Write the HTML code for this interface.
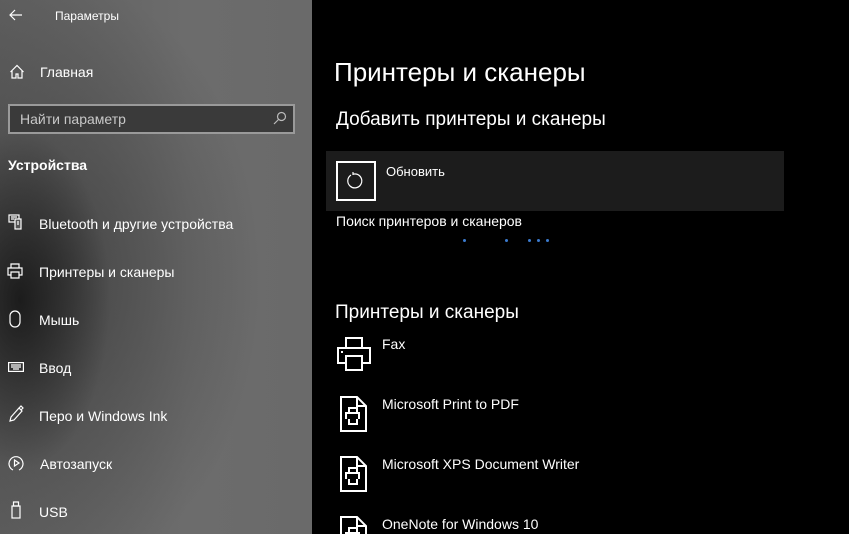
<!DOCTYPE html>
<html><head><meta charset="utf-8"><style>
*{margin:0;padding:0;box-sizing:border-box}
html,body{width:849px;height:534px;overflow:hidden}
body{background:#000;font-family:"Segoe UI","Liberation Sans","DejaVu Sans",sans-serif;color:#fff;position:relative}
.side{position:absolute;left:0;top:0;width:312px;height:534px;background:
radial-gradient(ellipse 90px 170px at 20px 300px,rgba(20,20,20,.85),rgba(20,20,20,0)),
radial-gradient(ellipse 200px 300px at 60px 280px,rgba(40,40,40,.5),rgba(40,40,40,0)),
linear-gradient(90deg,#5e5e5e,#6c6c6c 60%,#6a6a6a)}
.t{position:absolute;white-space:nowrap}
svg{position:absolute;fill:none;stroke:#fff;stroke-width:1.2}
.nav{font-size:14px;left:39px}
</style></head><body>
<div class="side">
<svg style="left:9px;top:8px" width="14" height="14" viewBox="0 0 14 14"><path d="M13 7H1M6 2L1 7l5 5"/></svg>
<div class="t" style="left:55px;top:9px;font-size:12px">Параметры</div>
<svg style="left:9px;top:64px" width="16" height="16" viewBox="0 0 16 16"><path d="M1.5 8L8 1.5 14.5 8M3 6.5V14h4v-4h2v4h4V6.5"/></svg>
<div class="t nav" style="left:40px;top:64px">Главная</div>
<div style="position:absolute;left:8px;top:104px;width:287px;height:30px;border:2px solid #9a9a9a;background:#3a3a3a"></div>
<div class="t" style="left:20px;top:111px;font-size:14px;color:#c8c8c8">Найти параметр</div>
<svg style="left:273px;top:111px;stroke:#bbb" width="14" height="14" viewBox="0 0 14 14"><circle cx="8.5" cy="5.5" r="4"/><path d="M5.5 8.5L1 13"/></svg>
<div class="t" style="left:8px;top:157px;font-size:14px;font-weight:bold">Устройства</div>
<svg style="left:8px;top:214px" width="16" height="16" viewBox="0 0 16 16"><rect x="1" y="1" width="10" height="7"/><rect x="7" y="5" width="6" height="10" fill="#555"/><path d="M3 3h6M3 5h3M9 8h2M9 10h2"/></svg>
<div class="t nav" style="top:216px">Bluetooth и другие устройства</div>
<svg style="left:7px;top:263px" width="16" height="16" viewBox="0 0 16 16"><path d="M4 5V1h8v4M4 12H1V5h14v7h-3M4 9h8v6H4z"/></svg>
<div class="t nav" style="top:264px">Принтеры и сканеры</div>
<svg style="left:9px;top:310px" width="12" height="18" viewBox="0 0 12 18"><rect x="1" y="1" width="10" height="16" rx="5"/></svg>
<div class="t nav" style="top:312px">Мышь</div>
<svg style="left:8px;top:362px" width="16" height="10" viewBox="0 0 16 10"><rect x=".6" y=".6" width="14.8" height="8.8"/><path d="M3 3h10M3 5h10M5 7h6"/></svg>
<div class="t nav" style="top:360px">Ввод</div>
<svg style="left:8px;top:405px" width="16" height="18" viewBox="0 0 16 18"><path d="M2 16l1-4 8-9 3 3-8 9zM11 3l2-2 2 2-2 2"/></svg>
<div class="t nav" style="top:408px">Перо и Windows Ink</div>
<svg style="left:8px;top:455px" width="16" height="17" viewBox="0 0 16 17"><path d="M5 15A7 7 0 1 1 11 15"/><path d="M6.5 5v6l4.5-3z"/></svg>
<div class="t nav" style="left:40px;top:456px">Автозапуск</div>
<svg style="left:11px;top:501px" width="10" height="18" viewBox="0 0 10 18"><rect x="1" y="5" width="8" height="12"/><path d="M2.5 1h5v4h-5z"/></svg>
<div class="t nav" style="top:504px">USB</div>
</div>
<div class="t" style="left:334px;top:57px;font-size:26px;font-weight:300">Принтеры и сканеры</div>
<div class="t" style="left:336px;top:109px;font-size:19px">Добавить принтеры и сканеры</div>
<div style="position:absolute;left:326px;top:151px;width:458px;height:60px;background:#1c1c1c"></div>
<div style="position:absolute;left:336px;top:161px;width:40px;height:40px;border:2px solid #fff"></div>
<svg style="left:346px;top:171px" width="20" height="20" viewBox="0 0 20 20"><path d="M5 4A7 7 0 1 0 10 3H7M7 1v3"/></svg>
<div class="t" style="left:386px;top:164px;font-size:13px">Обновить</div>
<div class="t" style="left:336px;top:213px;font-size:14px">Поиск принтеров и сканеров</div>
<div style="position:absolute;left:463px;top:239px;width:3px;height:3px;background:#3b7bcf;border-radius:50%;box-shadow:42px 0 #3b7bcf,65px 0 #3b7bcf,74px 0 #3b7bcf,83px 0 #3b7bcf"></div>
<div class="t" style="left:335px;top:302px;font-size:19px">Принтеры и сканеры</div>
<svg style="left:337px;top:337px;stroke-width:2" width="34" height="34" viewBox="0 0 34 34"><path d="M9 11V1h16v10M9 26H1V11h32v15h-8M9 19h16v14H9zM4 15h2"/></svg>
<div class="t" style="left:382px;top:336px;font-size:14px">Fax</div>
<svg style="left:340px;top:396px" width="28" height="36" viewBox="0 0 28 36"><path d="M1 1h16l9 9v25H1zM17 1v9h9M6 23v-6h13v6M9 17v-5h8v5M9 23v5h8v-5" stroke-width="2"/></svg>
<div class="t" style="left:382px;top:396px;font-size:14px">Microsoft Print to PDF</div>
<svg style="left:340px;top:456px" width="28" height="36" viewBox="0 0 28 36"><path d="M1 1h16l9 9v25H1zM17 1v9h9M6 23v-6h13v6M9 17v-5h8v5M9 23v5h8v-5" stroke-width="2"/></svg>
<div class="t" style="left:382px;top:456px;font-size:14px">Microsoft XPS Document Writer</div>
<svg style="left:340px;top:516px" width="28" height="18" viewBox="0 0 28 18"><path d="M1 18V1h16l9 9v8M17 1v9h9M6 18v-1h13v1M9 17v-5h8v5" stroke-width="2"/></svg>
<div class="t" style="left:382px;top:516px;font-size:14px">OneNote for Windows 10</div>
</body></html>
